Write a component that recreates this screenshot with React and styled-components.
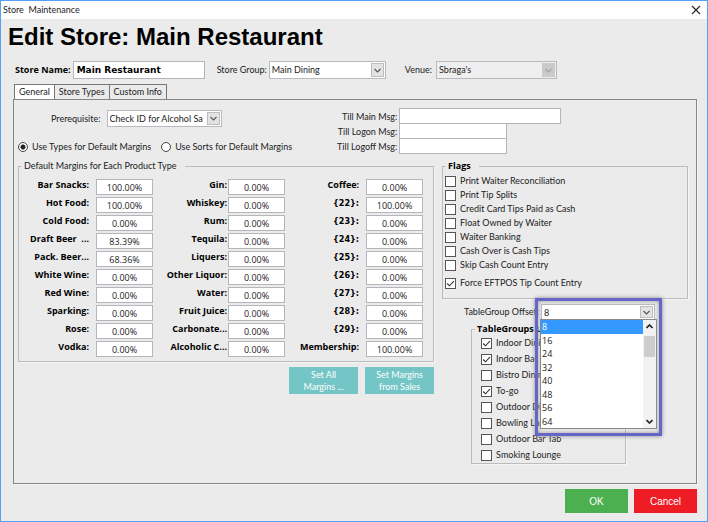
import React from "react";
import styled, { createGlobalStyle } from "styled-components";

const GlobalStyle = createGlobalStyle`
  * {
    box-sizing: border-box;
  }
  body {
    margin: 0;
    background: #ebebeb;
    color: #222;
    font-family: Lato, "Open Sans", sans-serif;
    font-size: 9px;
    line-height: 14px;
  }
  input, select, button {
    font: inherit;
    color: inherit;
    margin: 0;
  }
`;

const Window = styled.div`
  display: flex;
  flex-direction: column;
  min-height: 100vh;
  border: 1px solid #55a2f2;
`;

const TitleBar = styled.header`
  display: flex;
  align-items: center;
  justify-content: space-between;
  height: 18px;
  padding: 0 6px 0 2px;
  background: #fff;
  white-space: pre;
`;

const CloseButton = styled.button`
  display: flex;
  padding: 0;
  border: 0;
  background: none;
`;

const Heading = styled.h1`
  margin: 3px 0 9px 7px;
  color: #000;
  font: bold 24px/30px "Liberation Sans", Arial, sans-serif;
`;

const StoreRow = styled.div`
  display: flex;
  padding-left: 14px;
`;

const Field = styled.div`
  display: flex;
  align-items: center;
  gap: ${(p) => p.$gap || 2}px;
  margin-right: ${(p) => p.$after || 0}px;
`;

const Label = styled.label`
  white-space: pre;
`;

const BoldLabel = styled(Label)`
  color: #000;
  font-family: ${(p) => (p.$wide ? '"DejaVu Sans Condensed", "DejaVu Sans"' : '"Open Sans"')}, sans-serif;
  font-weight: bold;
`;

const TextInput = styled.input`
  width: ${(p) => p.$width}px;
  height: ${(p) => p.$height || 16}px;
  padding: 0 3px;
  border: 1px solid #b4b6bc;
  background: #fff;
`;

const NameInput = styled(TextInput)`
  color: #000;
  font-family: "DejaVu Sans", Verdana, sans-serif;
  font-weight: bold;
`;

const SelectBox = styled.div`
  display: flex;
  width: ${(p) => p.$width}px;
  height: ${(p) => p.$height || 18}px;
  padding: 1px;
  border: 1px solid #b9bac0;
  background: ${(p) => (p.$disabled ? "#efefef" : "#fff")};
  select {
    flex: 1;
    min-width: 0;
    padding: 0 1px;
    border: 0;
    appearance: none;
    background: none;
    opacity: 1;
    color: #222;
  }
`;

const Arrow = styled.span`
  display: flex;
  align-items: center;
  justify-content: center;
  width: 13px;
  border: 1px solid ${(p) => (p.$disabled ? "#cacaca" : "#bdbdbd")};
  background: ${(p) => (p.$disabled ? "#cacaca" : "#e3e3e3")};
  color: ${(p) => (p.$disabled ? "#a2a2a2" : "#555")};
`;

const Tabs = styled.div`
  display: flex;
  padding-left: 13px;
  margin-top: 5px;
`;

const Tab = styled.button`
  height: 15px;
  padding: 0 4px;
  border: 1px solid #777;
  border-width: 1px 1px 0 ${(p) => (p.$active ? 1 : 0)}px;
  background: ${(p) => (p.$active ? "#fff" : "#ebebeb")};
  line-height: 14px;
`;

const Panel = styled.main`
  flex: 1;
  margin: 0 10px 0 12px;
  padding: 7px 8px 0 4px;
  border: 1px solid #858585;
  box-shadow: 1px 1px 0 #f6f6f6;
`;

const TopArea = styled.div`
  display: flex;
  gap: 45px;
  height: 53px;
`;

const Prerequisite = styled.div`
  padding: 3px 0 0 33px;
`;

const Radios = styled.div`
  display: flex;
  gap: 10px;
  margin-top: 13px;
`;

const Choice = styled.label`
  display: flex;
  align-items: center;
  gap: 4px;
  height: ${(p) => p.$height || 14}px;
  white-space: nowrap;
`;

const Radio = styled.input`
  appearance: none;
  width: 10px;
  height: 10px;
  border: 1px solid #444;
  border-radius: 50%;
  background: #fff;
  &:checked {
    background: radial-gradient(circle, #222 0 2px, #fff 3px);
  }
`;

const Messages = styled.div`
  display: grid;
  grid-template-columns: auto 1fr;
  grid-auto-rows: 15px;
  column-gap: 2px;
  align-items: center;
  text-align: right;
  padding-top: 1px;
  label {
    padding-top: 2px;
  }
  input {
    justify-self: start;
  }
`;

const Columns = styled.div`
  display: grid;
  grid-template-columns: minmax(0, 22fr) minmax(0, 13fr);
  gap: 8px;
`;

const Group = styled.fieldset`
  min-width: 0;
  margin: 0;
  padding: 0;
  border: 1px solid #bcbcbc;
  box-shadow: 1px 1px 0 #f6f6f6;
  legend {
    margin-left: 3px;
    padding: 0 8px 0 2px;
    line-height: 12px;
  }
`;

const BoldGroup = styled(Group)`
  legend {
    color: #000;
    font-family: "Open Sans", sans-serif;
    font-weight: bold;
  }
`;

const MarginColumns = styled.div`
  display: grid;
  grid-template-columns: 134fr 132fr 138fr;
  padding: 7px 10px 4px 0;
`;

const MarginColumn = styled.div`
  display: grid;
  gap: 2px;
`;

const MarginRow = styled.div`
  display: flex;
  justify-content: flex-end;
  gap: ${(p) => p.$gap}px;
  height: 16px;
  label {
    line-height: 12px;
  }
`;

const Percent = styled(TextInput)`
  width: 57px;
  padding: 0;
  font-family: "Open Sans", sans-serif;
  text-align: center;
`;

const Actions = styled.div`
  display: flex;
  justify-content: flex-end;
  gap: 7px;
  margin-top: 5px;
`;

const TealButton = styled.button`
  width: 69px;
  height: 27px;
  padding: 0;
  border: 0;
  background: #73c5c6;
  color: #fff;
  line-height: 12px;
`;

const Checkbox = styled.span`
  display: grid;
  width: 11px;
  height: 11px;
  input, svg {
    grid-area: 1 / 1;
    width: 11px;
    height: 11px;
  }
  input {
    appearance: none;
    border: 1px solid #555;
    background: #fff;
  }
  svg {
    z-index: 1;
    pointer-events: none;
  }
`;

const FlagList = styled.div`
  padding: 2px 2px 8px;
  label:last-child {
    margin-top: 4px;
  }
`;

const OffsetRow = styled.div`
  display: flex;
  align-items: center;
  gap: 2px;
  margin: 5px 0 3px 22px;
`;

const OffsetPicker = styled.div`
  position: relative;
  margin-left: auto;
  margin-right: 35px;
  z-index: 2;
`;

const Highlight = styled.div`
  position: absolute;
  top: -6px;
  left: -6px;
  width: 127px;
  height: 138px;
  border: 3px solid #6666c8;
  box-shadow: 0 0 4px #888, inset 0 0 4px #999;
  pointer-events: none;
`;

const DropList = styled.div`
  position: absolute;
  top: 15px;
  left: -1px;
  display: flex;
  width: 117px;
  height: 110px;
  border: 1px solid #888;
  background: #fff;
`;

const Options = styled.ul`
  flex: 1;
  display: grid;
  grid-auto-rows: 1fr;
  margin: 0;
  padding: 0;
  list-style: none;
`;

const Option = styled.li`
  padding-left: 1px;
  background: ${(p) => (p.$selected ? "#3399ff" : "#fff")};
  color: ${(p) => (p.$selected ? "#fff" : "inherit")};
  font-family: "Open Sans", sans-serif;
  line-height: 13px;
`;

const ScrollBar = styled.div`
  display: flex;
  flex-direction: column;
  align-items: center;
  width: 13px;
  padding: 4px 0;
  background: #f2f2f2;
`;

const Thumb = styled.div`
  width: 11px;
  height: 21px;
  margin: 7px 0 auto;
  background: #cdcdcd;
`;

const TableGroups = styled(BoldGroup)`
  width: 155px;
  margin-left: 29px;
  padding: 0 9px;
  legend {
    margin-left: -6px;
  }
`;

const Footer = styled.footer`
  display: flex;
  justify-content: flex-end;
  gap: 6px;
  padding: 5px 10px 8px;
`;

const DialogButton = styled.button`
  width: 63px;
  height: 24px;
  border: 0;
  background: ${(p) => p.$color};
  color: #fff;
  font: 10px "Liberation Sans", Arial, sans-serif;
`;

const marginColumns = [
  {
    gap: 7,
    rows: [
      ["Bar Snacks:", "100.00%"],
      ["Hot Food:", "100.00%"],
      ["Cold Food:", "0.00%"],
      ["Draft Beer  ...", "83.39%"],
      ["Pack. Beer...", "68.36%"],
      ["White Wine:", "0.00%"],
      ["Red Wine:", "0.00%"],
      ["Sparking:", "0.00%"],
      ["Rose:", "0.00%"],
      ["Vodka:", "0.00%"],
    ],
  },
  {
    gap: 1,
    rows: [
      ["Gin:", "0.00%"],
      ["Whiskey:", "0.00%"],
      ["Rum:", "0.00%"],
      ["Tequila:", "0.00%"],
      ["Liquers:", "0.00%"],
      ["Other Liquor:", "0.00%"],
      ["Water:", "0.00%"],
      ["Fruit Juice:", "0.00%"],
      ["Carbonate...", "0.00%"],
      ["Alcoholic C...", "0.00%"],
    ],
  },
  {
    gap: 7,
    rows: [
      ["Coffee:", "0.00%"],
      ["{22}:", "100.00%"],
      ["{23}:", "0.00%"],
      ["{24}:", "0.00%"],
      ["{25}:", "0.00%"],
      ["{26}:", "0.00%"],
      ["{27}:", "0.00%"],
      ["{28}:", "0.00%"],
      ["{29}:", "0.00%"],
      ["Membership:", "100.00%"],
    ],
  },
];

const flags = [
  ["Print Waiter Reconciliation", false],
  ["Print Tip Splits", false],
  ["Credit Card Tips Paid as Cash", false],
  ["Float Owned by Waiter", false],
  ["Waiter Banking", false],
  ["Cash Over is Cash Tips", false],
  ["Skip Cash Count Entry", false],
  ["Force EFTPOS Tip Count Entry", true],
];

const tableGroups = [
  ["Indoor Dining", true],
  ["Indoor Bar", true],
  ["Bistro Dining", false],
  ["To-go", true],
  ["Outdoor Dining", false],
  ["Bowling Lanes", false],
  ["Outdoor Bar Tab", false],
  ["Smoking Lounge", false],
];

const offsets = [8, 16, 24, 32, 40, 48, 56, 64];

function Chevron({ up, bold }) {
  return (
    <svg width="7" height="5" viewBox="0 0 7 5" fill="none" stroke="currentColor" strokeWidth={bold ? 1.6 : 1.1}>
      <path d={up ? "M0.5 4 3.5 1 6.5 4" : "M0.5 1 3.5 4 6.5 1"} />
    </svg>
  );
}

function Select({ id, value, width, height, disabled }) {
  return (
    <SelectBox $width={width} $height={height} $disabled={disabled}>
      <select id={id} disabled={disabled}>
        <option>{value}</option>
      </select>
      <Arrow $disabled={disabled}>
        <Chevron />
      </Arrow>
    </SelectBox>
  );
}

function CheckItem({ text, checked, height }) {
  const [on, setOn] = React.useState(checked);
  return (
    <Choice $height={height}>
      <Checkbox>
        <input type="checkbox" checked={on} onChange={() => setOn(!on)} />
        {on && (
          <svg viewBox="0 0 11 11" fill="none" stroke="#333" strokeWidth="1.1">
            <path d="M2.2 5.5 4.5 7.8 8.9 3.2" />
          </svg>
        )}
      </Checkbox>
      {text}
    </Choice>
  );
}

function DefaultMargins() {
  return (
    <div>
      <Group>
        <legend>Default Margins for Each Product Type</legend>
        <MarginColumns>
          {marginColumns.map((column, c) => (
            <MarginColumn key={c}>
              {column.rows.map(([name, value], r) => (
                <MarginRow key={name} $gap={column.gap}>
                  <BoldLabel $wide={name.startsWith("{")} htmlFor={`margin-${c}-${r}`}>
                    {name}
                  </BoldLabel>
                  <Percent id={`margin-${c}-${r}`} defaultValue={value} />
                </MarginRow>
              ))}
            </MarginColumn>
          ))}
        </MarginColumns>
      </Group>
      <Actions>
        <TealButton>
          Set All
          <br />
          Margins ...
        </TealButton>
        <TealButton>
          Set Margins
          <br />
          from Sales
        </TealButton>
      </Actions>
    </div>
  );
}

function StoreFlags() {
  return (
    <div>
      <BoldGroup>
        <legend>Flags</legend>
        <FlagList>
          {flags.map(([text, checked]) => (
            <CheckItem key={text} text={text} checked={checked} />
          ))}
        </FlagList>
      </BoldGroup>
      <OffsetRow>
        <Label htmlFor="offset">TableGroup Offset:</Label>
        <OffsetPicker>
          <Highlight />
          <Select id="offset" value="8" width={114} height={16} />
          <DropList>
            <Options role="listbox" aria-label="TableGroup Offset">
              {offsets.map((n) => (
                <Option key={n} role="option" aria-selected={n === 8} $selected={n === 8}>
                  {n}
                </Option>
              ))}
            </Options>
            <ScrollBar>
              <Chevron up bold />
              <Thumb />
              <Chevron bold />
            </ScrollBar>
          </DropList>
        </OffsetPicker>
      </OffsetRow>
      <TableGroups>
        <legend>TableGroups Used</legend>
        {tableGroups.map(([text, checked]) => (
          <CheckItem key={text} text={text} checked={checked} height={16} />
        ))}
      </TableGroups>
    </div>
  );
}

function App() {
  return (
    <>
      <GlobalStyle />
      <Window>
        <TitleBar>
          <span>Store  Maintenance</span>
          <CloseButton aria-label="Close">
            <svg width="10" height="10" viewBox="0 0 10 10" stroke="#222" strokeWidth="1.1">
              <path d="M1 1 9 9M9 1 1 9" />
            </svg>
          </CloseButton>
        </TitleBar>
        <Heading>Edit Store: Main Restaurant</Heading>
        <StoreRow>
          <Field $after={12}>
            <BoldLabel htmlFor="name">Store Name:</BoldLabel>
            <NameInput id="name" $width={132} $height={18} defaultValue="Main Restaurant" />
          </Field>
          <Field $after={19}>
            <Label htmlFor="group">Store Group:</Label>
            <Select id="group" value="Main Dining" width={117} />
          </Field>
          <Field $gap={4}>
            <Label htmlFor="venue">Venue:</Label>
            <Select id="venue" value="Sbraga's" width={121} disabled />
          </Field>
        </StoreRow>
        <Tabs role="tablist">
          <Tab role="tab" aria-selected="true" $active>
            General
          </Tab>
          <Tab role="tab">Store Types</Tab>
          <Tab role="tab">Custom Info</Tab>
        </Tabs>
        <Panel>
          <TopArea>
            <div>
              <Prerequisite>
                <Field $gap={6}>
                  <Label htmlFor="prerequisite">Prerequisite:</Label>
                  <Select id="prerequisite" value="Check ID for Alcohol Sa" width={115} height={17} />
                </Field>
              </Prerequisite>
              <Radios>
                <Choice>
                  <Radio type="radio" name="defaults" defaultChecked />
                  Use Types for Default Margins
                </Choice>
                <Choice>
                  <Radio type="radio" name="defaults" />
                  Use Sorts for Default Margins
                </Choice>
              </Radios>
            </div>
            <Messages>
              <Label htmlFor="main-msg">Till Main Msg:</Label>
              <TextInput id="main-msg" $width={162} />
              <Label htmlFor="logon-msg">Till Logon Msg:</Label>
              <TextInput id="logon-msg" $width={108} />
              <Label htmlFor="logoff-msg">Till Logoff Msg:</Label>
              <TextInput id="logoff-msg" $width={108} />
            </Messages>
          </TopArea>
          <Columns>
            <DefaultMargins />
            <StoreFlags />
          </Columns>
        </Panel>
        <Footer>
          <DialogButton $color="#4caf50">OK</DialogButton>
          <DialogButton $color="#ee1c25">Cancel</DialogButton>
        </Footer>
      </Window>
    </>
  );
}

export default App;
